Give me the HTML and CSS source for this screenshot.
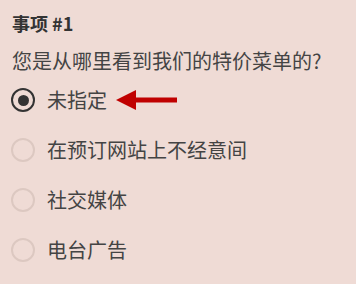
FILE: index.html
```html
<!DOCTYPE html>
<html lang="zh">
<head>
<meta charset="utf-8">
<link rel="stylesheet" href="styles.css">
</head>
<body>
<div class="card">
  <div class="title">事项 #1</div>
  <div class="question">您是从哪里看到我们的特价菜单的?</div>
  <div class="options">
    <div class="option">
      <span class="radio checked"></span>
      <span class="label">未指定</span>
      <svg class="arrow" width="64" height="22" viewBox="0 0 64 22">
        <polygon points="1,11 21,1 21,21" fill="#c00000"/>
        <rect x="20" y="8.5" width="42" height="5" fill="#c00000"/>
      </svg>
    </div>
    <div class="option">
      <span class="radio"></span>
      <span class="label">在预订网站上不经意间</span>
    </div>
    <div class="option">
      <span class="radio"></span>
      <span class="label">社交媒体</span>
    </div>
    <div class="option">
      <span class="radio"></span>
      <span class="label">电台广告</span>
    </div>
  </div>
</div>
</body>
</html>
```
FILE: styles.css
```css
html, body {
  margin: 0;
  padding: 0;
  background: #efdbd5;
}
body {
  font-family: "Noto Sans CJK SC", "Noto Sans", sans-serif;
  width: 356px;
  height: 284px;
  overflow: hidden;
}
.card {
  display: flex;
  flex-direction: column;
  padding: 11px 0 0 12px;
}
.title {
  font-size: 18px;
  font-weight: 700;
  line-height: 24px;
  color: #333;
}
.question {
  margin-top: 12px;
  font-size: 20px;
  line-height: 28px;
  color: #444;
}
.options {
  display: flex;
  flex-direction: column;
}
.option {
  height: 50px;
  display: flex;
  align-items: center;
}
.radio {
  width: 24px;
  height: 24px;
  box-sizing: border-box;
  border-radius: 50%;
  border: 2px solid #dcc8c1;
  margin-left: -1px;
  margin-right: 12px;
  flex: none;
  position: relative;
}
.radio.checked {
  border: 2.5px solid #333;
}
.radio.checked::after {
  content: "";
  position: absolute;
  left: 50%;
  top: 50%;
  width: 11px;
  height: 11px;
  margin: -5.5px 0 0 -5.5px;
  border-radius: 50%;
  background: #333;
}
.label {
  font-size: 20px;
  line-height: 28px;
  color: #444;
}
.arrow {
  margin-left: 8px;
  flex: none;
}
```
